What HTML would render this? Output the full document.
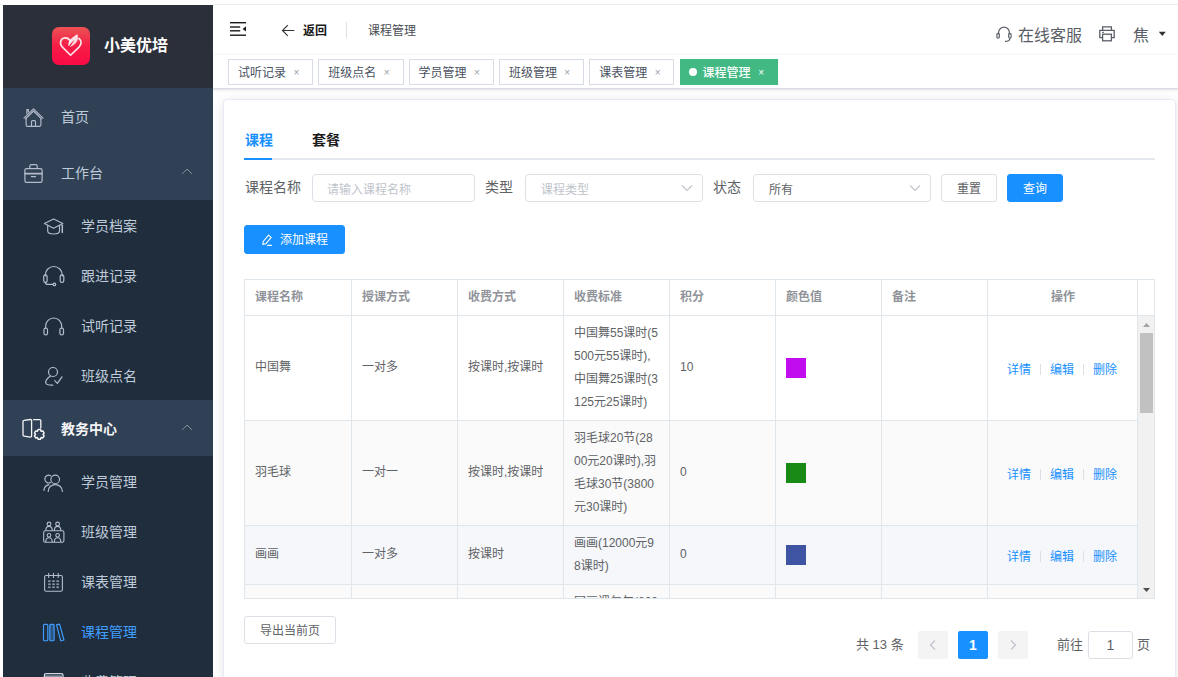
<!DOCTYPE html>
<html lang="zh-CN">
<head>
<meta charset="utf-8">
<title>课程管理</title>
<style>
*{box-sizing:border-box;}
html,body{margin:0;padding:0;}
body{width:1178px;height:677px;overflow:hidden;background:#fff;position:relative;
 font-family:"Liberation Sans","Noto Sans CJK SC",sans-serif;font-size:14px;color:#303133;}
.abs{position:absolute;}
#topline{left:213px;top:4px;width:965px;height:1px;background:#ececec;}
#topline2{left:0;top:4px;width:3px;height:1px;background:#ececec;}
/* ---------- sidebar ---------- */
#side{left:3px;top:5px;width:210px;height:672px;background:#304156;overflow:hidden;}
#logo{left:0;top:0;width:210px;height:83px;background:#2b2f3a;}
#logo .img{left:48.5px;top:22px;width:38px;height:38px;border-radius:7px;background:linear-gradient(180deg,#ec5355 0%,#f51d46 50%,#fb0a45 100%);}
#logo .t{left:101px;top:27px;font-size:16px;font-weight:bold;color:#fff;line-height:28px;white-space:nowrap;}
.mi{left:0;width:210px;height:56px;color:#bfcbd9;font-size:14px;}
.mi .tx{position:absolute;left:58px;top:1px;line-height:56px;white-space:nowrap;}
.mi svg.ic{position:absolute;left:20px;top:18px;width:20px;height:20px;}
.mi svg.ar{position:absolute;left:179px;top:24px;width:12px;height:8px;}
.sub{left:0;width:210px;background:#1f2d3d;}
.si{position:absolute;left:0;width:210px;height:50px;color:#bfcbd9;font-size:14px;}
.si .tx{position:absolute;left:78px;top:1px;line-height:50px;white-space:nowrap;}
.si svg.ic{position:absolute;left:40px;top:14px;width:22px;height:22px;}
.si.on{color:#409eff;}
/* ---------- header ---------- */
#nav{left:213px;top:5px;width:965px;height:50px;background:#fff;}
#tags{left:213px;top:55px;width:965px;height:34px;background:#fff;border-bottom:1px solid #d8dce5;box-shadow:0 1px 3px 0 rgba(0,0,0,.12),0 0 3px 0 rgba(0,0,0,.04);}
.tag{position:absolute;top:4px;height:26px;border:1px solid #d8dce5;background:#fff;color:#495060;font-size:12px;line-height:26px;padding-left:9px;white-space:nowrap;}
.tag .x{position:absolute;right:13px;top:0;font-size:10px;color:#9a9fa8;}
.tag .dot{position:absolute;left:8px;top:8px;width:8px;height:8px;border-radius:50%;background:#fff;}
.tag.on{background:#42b983;border-color:#42b983;color:#fff;font-weight:500;padding-left:22px;}
.tag.on .x{color:#fff;font-weight:normal;}
/* ---------- main ---------- */
#main{left:213px;top:89px;width:965px;height:588px;background:#fff;}
#card{left:223px;top:99px;width:953px;height:600px;background:#fff;border:1px solid #e6ebf5;border-radius:4px;box-shadow:0 2px 12px 0 rgba(0,0,0,.1);}

/* ---------- card content ---------- */
.tabt{position:absolute;top:30px;font-size:14px;font-weight:bold;line-height:20px;white-space:nowrap;}
.lbl{position:absolute;top:74px;height:28px;line-height:27px;font-size:14px;color:#606266;white-space:nowrap;}
.inp{position:absolute;top:74px;height:28px;border:1px solid #dcdfe6;border-radius:4px;background:#fff;font-size:12px;line-height:30px;padding-left:15px;color:#c0c4cc;white-space:nowrap;}
.inp svg{position:absolute;right:9px;top:9px;}
.btn{position:absolute;height:28px;border:1px solid #dcdfe6;border-radius:3px;background:#fff;color:#606266;font-size:12px;line-height:29px;text-align:center;white-space:nowrap;}
.btn.pri{background:#1890ff;border-color:#1890ff;color:#fff;}
#tbl{position:absolute;left:20px;top:179px;width:911px;height:320px;overflow:hidden;font-size:12px;color:#606266;background:#fff;}
#tbl .vl{position:absolute;top:0;width:1px;height:320px;background:#dfe6ec;}
#tbl .hl{position:absolute;left:0;width:911px;height:1px;background:#dfe6ec;}
#tbl .bg{position:absolute;left:1px;width:893px;}
#tbl .th{position:absolute;top:1px;height:35px;line-height:35px;font-weight:bold;color:#909399;white-space:nowrap;}
#tbl .c{position:absolute;line-height:23px;white-space:nowrap;}
#tbl .sq{position:absolute;left:542px;width:20px;height:20px;}
#tbl .op{position:absolute;left:743px;margin-top:1.5px;width:150px;text-align:center;line-height:23px;color:#1890ff;white-space:nowrap;}
#tbl .op i{display:inline-block;width:1px;height:11px;background:#dcdfe6;margin:0 9px;vertical-align:-1px;}
.pg{position:absolute;top:531px;height:28px;line-height:28px;font-size:13px;color:#606266;white-space:nowrap;}
.pb{position:absolute;top:531px;width:30px;height:28px;border-radius:2px;background:#f4f4f5;}
</style>
</head>
<body>
<div id="topline" class="abs"></div><div id="topline2" class="abs"></div>

<div id="side" class="abs">
  <div id="logo" class="abs">
    <div class="img abs"></div>
    <div class="t abs">小美优培</div>
  </div>
  <div class="mi abs" style="top:83px"><span class="tx">首页</span></div>
  <div class="mi abs" style="top:139px"><span class="tx">工作台</span></div>
  <div class="sub abs" style="top:195px;height:200px">
    <div class="si" style="top:0"><span class="tx">学员档案</span></div>
    <div class="si" style="top:50px"><span class="tx">跟进记录</span></div>
    <div class="si" style="top:100px"><span class="tx">试听记录</span></div>
    <div class="si" style="top:150px"><span class="tx">班级点名</span></div>
  </div>
  <div class="mi abs" style="top:395px;color:#f4f4f5;font-weight:bold"><span class="tx">教务中心</span></div>
  <div class="sub abs" style="top:451px;height:260px">
    <div class="si" style="top:0"><span class="tx">学员管理</span></div>
    <div class="si" style="top:50px"><span class="tx">班级管理</span></div>
    <div class="si" style="top:100px"><span class="tx">课表管理</span></div>
    <div class="si on" style="top:150px"><span class="tx">课程管理</span></div>
    <div class="si" style="top:200px"><span class="tx">收费管理</span></div>
  </div>
<svg class="abs" style="left:0;top:0" width="210" height="672" viewBox="3 5 210 672" fill="none" stroke-linecap="round" stroke-linejoin="round">
  <!-- logo heart -->
  <g stroke="#fff" stroke-opacity=".88" stroke-width="1.8" transform="translate(70.6 46.6) scale(.94) translate(-70.6 -46.2)">
    <path d="M70.6 55.4L61.6 46.4C58.6 43.2 59.6 37.4 64.4 36.9C67.2 36.6 69 38 70.6 40.2M70.6 55.4L79.8 46.4C82.6 43.4 82.2 39.4 79.4 37.6"/>
  </g>
  <path d="M68.8 45.6C67.6 41 72 38 77.2 34.6C78.6 39 77 43.8 70.4 46.6C72.6 43.6 74 41.6 75 39.4C72.6 41.2 70.4 43 68.8 45.6Z" fill="#fff" fill-opacity=".85" stroke="#fff" stroke-opacity=".6" stroke-width=".8"/>
  <!-- home -->
  <g stroke="#b4bccc" stroke-width="1.15">
    <path d="M24 118.2L33.5 108.8L43 118.2"/>
    <path d="M25.6 118.9L33.5 111L41.4 118.9"/>
    <path d="M26.1 118.6V124.8a1.6 1.6 0 0 0 1.6 1.6H39.3a1.6 1.6 0 0 0 1.6-1.6V118.6"/>
    <path d="M31.5 126.3V121.6a1 1 0 0 1 1-1h2a1 1 0 0 1 1 1V126.3"/>
    <path d="M26.9 113.6V109.6h1.5v2.4"/>
  </g>
  <!-- briefcase -->
  <g stroke="#b4bccc" stroke-width="1.2">
    <path d="M29.8 168.4V166.2a1.6 1.6 0 0 1 1.6-1.6h4.2a1.6 1.6 0 0 1 1.6 1.6V168.4"/>
    <rect x="24.9" y="168.6" width="17.2" height="13.8" rx="1.6"/>
    <path d="M25 173.6H42" stroke-width="1.7"/>
    <path d="M31.4 176.6H35.6"/>
  </g>
  <!-- chevrons -->
  <g stroke="#8693a3" stroke-width="1">
    <path d="M182.6 173.6L187.1 169L191.6 173.6"/>
    <path d="M182.6 429.6L187.1 425L191.6 429.6"/>
  </g>
  <!-- graduation cap -->
  <g stroke="#b4bccc" stroke-width="1.15">
    <path d="M53.6 218.9L62.8 223.6L53.6 228.3L44.4 223.6Z"/>
    <path d="M47.7 225.6V231c0 1.7 2.6 3 5.9 3s5.9-1.3 5.9-3V225.6"/>
    <path d="M62.3 225.2V232.4" stroke-width="1.5"/>
  </g>
  <!-- service headset -->
  <g stroke="#b4bccc" stroke-width="1.2">
    <path d="M45.3 276V275a8.5 8.5 0 0 1 17 0V276"/>
    <rect x="43.7" y="274.8" width="3.4" height="7.6" rx="1.7"/>
    <rect x="60.2" y="274.8" width="3.6" height="7.6" rx="1.7"/>
    <path d="M45.4 282.4c0 1.5 1.2 2 2.8 2H52.8"/>
    <circle cx="54.4" cy="284.4" r="1.3"/>
  </g>
  <!-- headset -->
  <g stroke="#b4bccc" stroke-width="1.2">
    <path d="M45.7 328.4V326a8 8 0 0 1 16 0V328.4"/>
    <rect x="44" y="328" width="3.5" height="7" rx="1.7"/>
    <rect x="59.9" y="328" width="3.6" height="7" rx="1.7"/>
  </g>
  <!-- user check -->
  <g stroke="#b4bccc" stroke-width="1.2">
    <circle cx="53" cy="372" r="4.5"/>
    <path d="M50.4 376C47.2 378.4 44.9 381.4 46 383.5C47 385.3 50 385 52.8 385.2"/>
    <path d="M54.7 380.6L57.4 383.4L62 376.8"/>
  </g>
  <!-- book + gear -->
  <g stroke="#f4f4f5" stroke-width="1.3">
    <path d="M24 420.4L30.4 419.5a1.1 1.1 0 0 1 1.2 1.1V436a1.1 1.1 0 0 1-1.2 1.1L24 436.2a1.1 1.1 0 0 1-1-1.1V421.5a1.1 1.1 0 0 1 1-1.1Z"/>
    <path d="M33.6 419.7H39.6a1.2 1.2 0 0 1 1.2 1.2V428"/>
    <path d="M38.1 429.5 L40.5 429.5 L41.1 431.2 L42.9 430.9 L44.1 433.0 L43.0 434.4 L44.1 435.8 L42.9 437.9 L41.1 437.6 L40.5 439.3 L38.1 439.3 L37.4 437.6 L35.7 437.9 L34.5 435.8 L35.6 434.4 L34.5 433.0 L35.7 430.9 L37.4 431.2Z" stroke-width="1.5"/>
  </g>
  <!-- users -->
  <g stroke="#b4bccc" stroke-width="1.15">
    <circle cx="55.2" cy="479.4" r="4.3"/>
    <path d="M50.6 475.7a3.9 3.9 0 1 0 0 6.8"/>
    <path d="M48.2 491.4c0-4 3-6.8 7-6.8s7.2 2.8 7.2 6.8"/>
    <path d="M43.9 490.4c.3-3 2.2-5.2 5-5.8"/>
  </g>
  <!-- class -->
  <g stroke="#b4bccc" stroke-width="1.1">
    <circle cx="49" cy="524" r="1.9"/><circle cx="57.6" cy="524" r="1.9"/>
    <path d="M45.8 530.4c0-2.6 1.2-4 3.2-4s3.2 1.4 3.2 4M54.4 530.4c0-2.6 1.2-4 3.2-4s3.2 1.4 3.2 4"/>
    <rect x="43.7" y="530.7" width="20.2" height="11.6" rx="1.6"/>
    <circle cx="49" cy="535.3" r="1.8"/><circle cx="57.6" cy="535.3" r="1.8"/>
    <path d="M45.8 541.8c0-2.6 1.2-4 3.2-4s3.2 1.4 3.2 4M54.4 541.8c0-2.6 1.2-4 3.2-4s3.2 1.4 3.2 4"/>
  </g>
  <!-- calendar -->
  <g stroke="#b4bccc" stroke-width="1.1">
    <rect x="44.6" y="575.5" width="17.8" height="15.8" rx="1.6"/>
    <path d="M48.7 573.4V577.4M53.5 573.4V577.4M58.2 573.4V577.4"/>
  </g>
  <g fill="#8d98a8" stroke="none"><rect x="48.1" y="580.3" width="2.5" height="1.7"/><rect x="52.3" y="580.3" width="2.5" height="1.7"/><rect x="56.4" y="580.3" width="2.5" height="1.7"/><rect x="48.1" y="583.4" width="2.5" height="1.7"/><rect x="52.3" y="583.4" width="2.5" height="1.7"/><rect x="56.4" y="583.4" width="2.5" height="1.7"/><rect x="48.1" y="586.4" width="2.5" height="1.7"/><rect x="52.3" y="586.4" width="2.5" height="1.7"/><rect x="56.4" y="586.4" width="2.5" height="1.7"/></g>
  <!-- books (active) -->
  <g stroke="#409eff" stroke-width="1.15">
    <rect x="43.5" y="624.3" width="4.3" height="16.4" rx="1"/>
    <rect x="49.8" y="624.3" width="4.3" height="16.4" rx="1" fill="#409eff" fill-opacity=".35"/>
    <path d="M56.5 624.9L59.6 624.1L64 640L60.8 640.8Z"/>
  </g>
  <!-- card -->
  <g stroke="#d0d6e0" stroke-width="1.3">
    <rect x="44.4" y="673.6" width="18.6" height="14" rx="1.6"/>
  </g>
  <rect x="45" y="675.4" width="17.4" height="3" fill="#8d98a8"/>
</svg>
</div>

<div id="main" class="abs"></div>
<div id="card" class="abs">
  <div class="tabt" style="left:21px;color:#1890ff">课程</div>
  <div class="tabt" style="left:88px;color:#1a1a1a">套餐</div>
  <div class="abs" style="left:20px;top:58px;width:911px;height:2px;background:#e4e7ed"></div>
  <div class="abs" style="left:20px;top:58px;width:28px;height:2px;background:#1890ff"></div>

  <div class="lbl" style="left:21px">课程名称</div>
  <div class="inp" style="left:88px;width:163px;padding-left:14px">请输入课程名称</div>
  <div class="lbl" style="left:261px">类型</div>
  <div class="inp" style="left:301px;width:178px">课程类型<svg width="12" height="8" viewBox="0 0 12 8"><path d="M1 1.5l5 5 5-5" fill="none" stroke="#c0c4cc" stroke-width="1.1"/></svg></div>
  <div class="lbl" style="left:489px">状态</div>
  <div class="inp" style="left:529px;width:178px;color:#606266">所有<svg width="12" height="8" viewBox="0 0 12 8"><path d="M1 1.5l5 5 5-5" fill="none" stroke="#c0c4cc" stroke-width="1.1"/></svg></div>
  <div class="btn" style="left:717px;top:74px;width:56px">重置</div>
  <div class="btn pri" style="left:783px;top:74px;width:56px">查询</div>

  <div class="btn pri" style="left:20px;top:125px;width:101px;height:29px;text-align:left;padding-left:35px">添加课程
    <svg class="abs" style="left:15px;top:7px" width="14" height="14" viewBox="0 0 14 14"><path d="M8.6 2.2l2.6 2.2-5.4 6.4-3 .6.4-2.9zM7.2 12.4h4.6" fill="none" stroke="#fff" stroke-width="1.1" stroke-linejoin="round"/></svg>
  </div>

  <div id="tbl">
    <div class="bg" style="top:1px;height:35px;background:#fff"></div>
    <div class="bg" style="top:37px;height:104px;background:#fff"></div>
    <div class="bg" style="top:142px;height:104px;background:#fafafa"></div>
    <div class="bg" style="top:247px;height:58px;background:#f5f7fa"></div>
    <div class="bg" style="top:306px;height:104px;background:#fafafa"></div>
    <div class="th" style="left:11px">课程名称</div>
    <div class="th" style="left:118px">授课方式</div>
    <div class="th" style="left:224px">收费方式</div>
    <div class="th" style="left:330px">收费标准</div>
    <div class="th" style="left:436px">积分</div>
    <div class="th" style="left:542px">颜色值</div>
    <div class="th" style="left:648px">备注</div>
    <div class="th" style="left:744px;width:150px;text-align:center">操作</div>
    <div class="c" style="left:11px;top:76.5px">中国舞</div>
    <div class="c" style="left:118px;top:76.5px">一对多</div>
    <div class="c" style="left:224px;top:76.5px">按课时,按课时</div>
    <div class="c" style="left:330px;top:43px">中国舞55课时(5<br>500元55课时),<br>中国舞25课时(3<br>125元25课时)</div>
    <div class="c" style="left:436px;top:76.5px">10</div>
    <div class="sq" style="top:79.0px;background:#c20cf0"></div>
    <div class="op" style="top:78.0px">详情<i></i>编辑<i></i>删除</div>
    <div class="c" style="left:11px;top:181.5px">羽毛球</div>
    <div class="c" style="left:118px;top:181.5px">一对一</div>
    <div class="c" style="left:224px;top:181.5px">按课时,按课时</div>
    <div class="c" style="left:330px;top:148px">羽毛球20节(28<br>00元20课时),羽<br>毛球30节(3800<br>元30课时)</div>
    <div class="c" style="left:436px;top:181.5px">0</div>
    <div class="sq" style="top:184.0px;background:#1a8a16"></div>
    <div class="op" style="top:183.0px">详情<i></i>编辑<i></i>删除</div>
    <div class="c" style="left:11px;top:263.5px">画画</div>
    <div class="c" style="left:118px;top:263.5px">一对多</div>
    <div class="c" style="left:224px;top:263.5px">按课时</div>
    <div class="c" style="left:330px;top:253px">画画(12000元9<br>8课时)</div>
    <div class="c" style="left:436px;top:263.5px">0</div>
    <div class="sq" style="top:266.0px;background:#3f55a4"></div>
    <div class="op" style="top:265.0px">详情<i></i>编辑<i></i>删除</div>
    <div class="c" style="left:11px;top:345.5px">国画</div>
    <div class="c" style="left:118px;top:345.5px">一对多</div>
    <div class="c" style="left:224px;top:345.5px">按年</div>
    <div class="c" style="left:330px;top:312px">国画课包年(600<br>0元1年)</div>
    <div class="c" style="left:436px;top:345.5px">0</div>
    <div class="sq" style="top:348.0px;background:#e6a23c"></div>
    <div class="op" style="top:347.0px">详情<i></i>编辑<i></i>删除</div>
    <div class="hl" style="top:0px"></div>
    <div class="hl" style="top:36px"></div>
    <div class="hl" style="top:141px"></div>
    <div class="hl" style="top:246px"></div>
    <div class="hl" style="top:305px"></div>
    <div class="hl" style="top:319px"></div>
    <div class="vl" style="left:0px"></div>
    <div class="vl" style="left:107px"></div>
    <div class="vl" style="left:213px"></div>
    <div class="vl" style="left:319px"></div>
    <div class="vl" style="left:425px"></div>
    <div class="vl" style="left:531px"></div>
    <div class="vl" style="left:637px"></div>
    <div class="vl" style="left:743px"></div>
    <div class="vl" style="left:893px"></div>
    <div class="vl" style="left:910px"></div>
    <div class="abs" style="left:894px;top:37px;width:16px;height:282px;background:#f1f1f1"></div>
    <div class="abs" style="left:896px;top:54px;width:13px;height:80px;background:#c1c1c1"></div>
    <svg class="abs" style="left:898px;top:43px" width="9" height="6" viewBox="0 0 9 6"><path d="M1 5L4.5 1L8 5z" fill="#a3a3a3"/></svg>
    <svg class="abs" style="left:898px;top:308px" width="9" height="6" viewBox="0 0 9 6"><path d="M1 1L4.5 5L8 1z" fill="#505050"/></svg>
  </div>

  <div class="btn" style="left:20px;top:516px;width:92px">导出当前页</div>

  <div class="pg" style="left:632px">共 13 条</div>
  <div class="pb" style="left:694px"><svg class="abs" style="left:10px;top:8px" width="10" height="12" viewBox="0 0 10 12"><path d="M7 1.5L2.5 6L7 10.5" fill="none" stroke="#c0c4cc" stroke-width="1.3"/></svg></div>
  <div class="pb" style="left:734px;background:#1890ff;color:#fff;font-weight:bold;font-size:14px;line-height:28px;text-align:center">1</div>
  <div class="pb" style="left:774px"><svg class="abs" style="left:10px;top:8px" width="10" height="12" viewBox="0 0 10 12"><path d="M3 1.5L7.5 6L3 10.5" fill="none" stroke="#c0c4cc" stroke-width="1.3"/></svg></div>
  <div class="pg" style="left:833px">前往</div>
  <div class="abs" style="left:864px;top:531px;width:45px;height:28px;border:1px solid #dcdfe6;border-radius:3px;font-size:14px;line-height:27px;text-align:center;color:#606266">1</div>
  <div class="pg" style="left:913px">页</div>
</div>
<div id="nav" class="abs">
  <svg class="abs" style="left:16px;top:16px" width="18" height="16" viewBox="0 0 18 16"><g fill="#1a1a1a"><rect x="1" y="1" width="16" height="1.4"/><rect x="1" y="5.3" width="10.2" height="1.4"/><rect x="1" y="9.1" width="10.2" height="1.4"/><rect x="1" y="13.5" width="16" height="1.4"/><path d="M17 5.2v5.4l-3.4-2.7z"/></g></svg>
  <svg class="abs" style="left:68px;top:18px" width="14" height="14" viewBox="0 0 14 14"><path d="M13.3 7.5H1.8M6.8 2.2L1.5 7.5l5.3 5.3" fill="none" stroke="#303133" stroke-width="1.1"/></svg>
  <div class="abs" style="left:90px;top:15px;font-size:12px;font-weight:bold;color:#1a1a1a;line-height:22px;white-space:nowrap">返回</div>
  <div class="abs" style="left:133px;top:17px;width:1px;height:16px;background:#dcdfe6"></div>
  <div class="abs" style="left:155px;top:15px;font-size:12px;color:#4a4d55;line-height:22px;white-space:nowrap">课程管理</div>
  <svg class="abs" style="left:782px;top:20px" width="18" height="18" viewBox="0 0 18 18"><g fill="none" stroke="#5a5e66" stroke-width="1.2"><path d="M3.6 9.2V7.6a5.4 5.4 0 0 1 10.8 0v1.6"/><rect x="1.9" y="8.4" width="2.4" height="4.8" rx="1.2"/><rect x="13.7" y="8.4" width="2.4" height="4.8" rx="1.2"/><path d="M14.9 13.2c0 2-2 3.2-4.9 3.2"/></g></svg>
  <div class="abs" style="left:805px;top:20px;font-size:16px;color:#5a5e66;line-height:22px;white-space:nowrap">在线客服</div>
  <svg class="abs" style="left:885px;top:20px" width="18" height="18" viewBox="0 0 18 18"><g fill="none" stroke="#5a5e66" stroke-width="1.3"><path d="M4.6 5.2V1.8h8.8v3.4"/><path d="M4.4 12.6H1.8V5.4h14.4v7.2h-2.6"/><rect x="4.6" y="9.2" width="8.8" height="6.6"/><path d="M4.2 7.4h1.6"/></g></svg>
  <div class="abs" style="left:920px;top:20px;font-size:16px;color:#5a5e66;line-height:22px;white-space:nowrap">焦</div>
  <svg class="abs" style="left:945px;top:26px" width="9" height="6" viewBox="0 0 9 6"><path d="M0.8 0.8h7L4.3 5z" fill="#303133"/></svg>
</div>
<div id="tags" class="abs">
  <div class="tag" style="left:15px;width:85.3px">试听记录<span class="x">×</span></div>
  <div class="tag" style="left:105.3px;width:85.3px">班级点名<span class="x">×</span></div>
  <div class="tag" style="left:195.6px;width:85.3px">学员管理<span class="x">×</span></div>
  <div class="tag" style="left:285.9px;width:85.3px">班级管理<span class="x">×</span></div>
  <div class="tag" style="left:376.2px;width:85.3px">课表管理<span class="x">×</span></div>
  <div class="tag on" style="left:466.6px;width:98.4px"><i class="dot"></i>课程管理<span class="x">×</span></div>
</div>
</body>
</html>
